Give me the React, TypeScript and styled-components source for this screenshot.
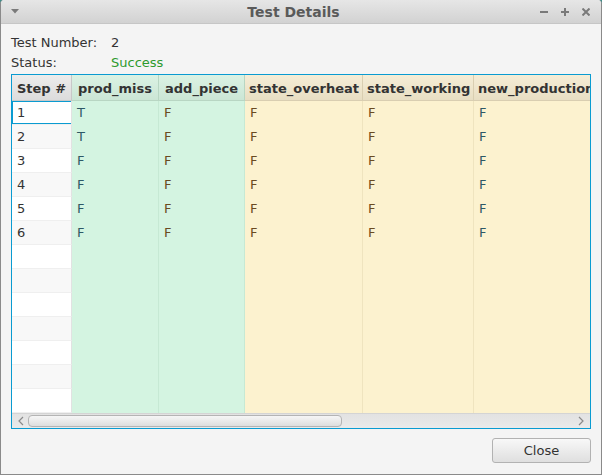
import React from "react";
import styled, { createGlobalStyle, css } from "styled-components";

type Tone = "plain" | "green" | "yellow";

interface Column {
  key: string;
  label: string;
  width: number;
  tone: Tone;
  ink: string;
}

// ink mimics the coloured fringes the JavaFX renderer leaves on each column
const columns: Column[] = [
  { key: "step", label: "Step #", width: 60, tone: "plain", ink: "#333" },
  { key: "prod_miss", label: "prod_miss", width: 87, tone: "green", ink: "#2e5866" },
  { key: "add_piece", label: "add_piece", width: 86, tone: "green", ink: "#6a4b22" },
  { key: "state_overheat", label: "state_overheat", width: 118, tone: "yellow", ink: "#6a4b22" },
  { key: "state_working", label: "state_working", width: 111, tone: "yellow", ink: "#6a4b22" },
  { key: "new_production", label: "new_production", width: 120, tone: "yellow", ink: "#2e5866" },
];

const rows: Record<string, string>[] = [
  { step: "1", prod_miss: "T", add_piece: "F", state_overheat: "F", state_working: "F", new_production: "F" },
  { step: "2", prod_miss: "T", add_piece: "F", state_overheat: "F", state_working: "F", new_production: "F" },
  { step: "3", prod_miss: "F", add_piece: "F", state_overheat: "F", state_working: "F", new_production: "F" },
  { step: "4", prod_miss: "F", add_piece: "F", state_overheat: "F", state_working: "F", new_production: "F" },
  { step: "5", prod_miss: "F", add_piece: "F", state_overheat: "F", state_working: "F", new_production: "F" },
  { step: "6", prod_miss: "F", add_piece: "F", state_overheat: "F", state_working: "F", new_production: "F" },
];

const VISIBLE_ROWS = 13;

const GlobalStyle = createGlobalStyle`
  html, body {
    margin: 0;
    padding: 0;
    background: #3f8f8c;
  }
  * {
    box-sizing: border-box;
  }
`;

const Window = styled.div`
  width: 602px;
  height: 475px;
  display: flex;
  flex-direction: column;
  background: #f4f4f4;
  border: 1px solid #8a8a8a;
  border-top: none;
  border-radius: 4px 4px 0 0;
  overflow: hidden;
  font-family: "DejaVu Sans", Verdana, sans-serif;
  font-size: 13px;
  color: #333;
`;

const TitleBar = styled.div`
  height: 24px;
  flex-shrink: 0;
  display: flex;
  align-items: center;
  padding: 0 11px 0 10px;
  background: linear-gradient(#e6e6e6, #d2d2d2);
  border-bottom: 1px solid #c6c6c6;
`;

const Title = styled.div`
  flex: 1;
  text-align: center;
  font-size: 14px;
  font-weight: bold;
  color: #5a5a5a;
  padding-left: 28px;
`;

const WindowControls = styled.div`
  display: flex;
  align-items: center;
  gap: 13px;
`;

const Body = styled.div`
  flex: 1;
  display: flex;
  flex-direction: column;
  padding: 8px 10px 11px 10px;
`;

const InfoGrid = styled.div`
  display: grid;
  grid-template-columns: 100px auto;
  grid-auto-rows: 20px;
  align-items: center;
  margin-bottom: 2px;
`;

const InfoValue = styled.span<{ $success?: boolean }>`
  color: ${(p) => (p.$success ? "#2d9a2d" : "#333")};
`;

const TableFrame = styled.div`
  height: 355px;
  display: flex;
  flex-direction: column;
  border: 1px solid #0a9bd1;
  background: #fff;
  overflow: hidden;
`;

const HeaderRow = styled.div`
  display: flex;
  height: 26px;
  flex-shrink: 0;
`;

const headerTones = {
  plain: css`
    background: linear-gradient(#ececec, #dcdcdc);
    border-color: #c8c8c8;
  `,
  green: css`
    background: linear-gradient(#dbf2e4, #cbe6d5);
    border-color: #b8d6c3;
  `,
  yellow: css`
    background: linear-gradient(#f5edd6, #e8dec3);
    border-color: #d9ceb1;
  `,
};

const HeaderCell = styled.div<{ $w: number; $tone: Tone }>`
  width: ${(p) => p.$w}px;
  flex-shrink: 0;
  height: 26px;
  line-height: 27px;
  padding: 0 4px;
  text-align: center;
  white-space: nowrap;
  overflow: hidden;
  font-weight: bold;
  color: #333;
  border-right: 1px solid;
  border-bottom: 1px solid;
  ${(p) => headerTones[p.$tone]}
`;

const RowsArea = styled.div`
  flex: 1;
  overflow: hidden;
`;

const Row = styled.div`
  display: flex;
  height: 24px;
`;

const cellTones = {
  plain: css`
    border-right: 1px solid #e2e2e2;
    border-bottom: 1px solid #efefef;
  `,
  green: css`
    background: #d4f4e1;
    border-right: 1px solid #c6e9d4;
  `,
  yellow: css`
    background: #fcf2cf;
    border-right: 1px solid #efe4bf;
  `,
};

const Cell = styled.div<{ $w: number; $tone: Tone; $ink: string; $odd: boolean; $focused?: boolean }>`
  width: ${(p) => p.$w}px;
  flex-shrink: 0;
  height: 24px;
  line-height: 23px;
  padding: 0 5px;
  white-space: nowrap;
  overflow: hidden;
  color: ${(p) => p.$ink};
  background: ${(p) => (p.$odd ? "#fff" : "#f8f8f8")};
  ${(p) => cellTones[p.$tone]}
  ${(p) =>
    p.$focused &&
    css`
      box-shadow: inset 1px 1px 0 #0a9bd1, inset 0 -1px 0 #0a9bd1;
    `}
`;

const ScrollBar = styled.div`
  height: 15px;
  flex-shrink: 0;
  display: flex;
  align-items: center;
  padding: 0 4px;
  background: linear-gradient(#e2e2e2, #eaeaea);
  border-top: 1px solid #d4d4d4;
`;

const ScrollArrow = styled.div`
  width: 10px;
  display: flex;
  justify-content: center;
  align-items: center;
`;

const Track = styled.div`
  flex: 1;
  height: 100%;
  display: flex;
  align-items: center;
  padding: 0 2px;
`;

const Thumb = styled.div`
  width: 314px;
  height: 12px;
  border: 1px solid #b4b4b4;
  border-radius: 4px;
  background: linear-gradient(#f6f6f6, #dedede);
`;

const Footer = styled.div`
  display: flex;
  justify-content: flex-end;
  margin-top: 9px;
`;

const Button = styled.button`
  width: 99px;
  height: 25px;
  padding: 0;
  font-family: "DejaVu Sans", Verdana, sans-serif;
  font-size: 13px;
  color: #333;
  border: 1px solid #b2b2b2;
  border-radius: 3px;
  background: linear-gradient(#f8f8f8, #dfdfdf);
`;

const Chevron: React.FC<{ dir: "left" | "right" }> = ({ dir }) => (
  <svg width="6" height="10" viewBox="0 0 6 10">
    <path
      d={dir === "left" ? "M5 1 L1 5 L5 9" : "M1 1 L5 5 L1 9"}
      fill="none"
      stroke="#8a8a8a"
      strokeWidth="1.2"
    />
  </svg>
);

const App: React.FC = () => {
  const visible = Array.from({ length: VISIBLE_ROWS }, (_, i) => rows[i] ?? null);

  return (
    <>
      <GlobalStyle />
      <Window>
        <TitleBar>
          <svg width="8" height="5" viewBox="0 0 8 5">
            <path d="M0 0 H8 L4 4.5 Z" fill="#7a7a7a" />
          </svg>
          <Title>Test Details</Title>
          <WindowControls>
            <svg width="8" height="8" viewBox="0 0 8 8">
              <path d="M0 4 H8" stroke="#7a7a7a" strokeWidth="2" />
            </svg>
            <svg width="8" height="8" viewBox="0 0 8 8">
              <path d="M0 4 H8 M4 0 V8" stroke="#7a7a7a" strokeWidth="2" />
            </svg>
            <svg width="8" height="8" viewBox="0 0 8 8">
              <path d="M0.5 0.5 L7.5 7.5 M7.5 0.5 L0.5 7.5" stroke="#7a7a7a" strokeWidth="2" />
            </svg>
          </WindowControls>
        </TitleBar>
        <Body>
          <InfoGrid>
            <span>Test Number:</span>
            <InfoValue>2</InfoValue>
            <span>Status:</span>
            <InfoValue $success>Success</InfoValue>
          </InfoGrid>
          <TableFrame>
            <HeaderRow>
              {columns.map((c) => (
                <HeaderCell key={c.key} $w={c.width} $tone={c.tone}>
                  {c.label}
                </HeaderCell>
              ))}
            </HeaderRow>
            <RowsArea>
              {visible.map((r, i) => (
                <Row key={i}>
                  {columns.map((c) => (
                    <Cell
                      key={c.key}
                      $w={c.width}
                      $tone={c.tone}
                      $ink={c.ink}
                      $odd={i % 2 === 0}
                      $focused={i === 0 && c.key === "step"}
                    >
                      {r ? r[c.key] : ""}
                    </Cell>
                  ))}
                </Row>
              ))}
            </RowsArea>
            <ScrollBar>
              <ScrollArrow>
                <Chevron dir="left" />
              </ScrollArrow>
              <Track>
                <Thumb />
              </Track>
              <ScrollArrow>
                <Chevron dir="right" />
              </ScrollArrow>
            </ScrollBar>
          </TableFrame>
          <Footer>
            <Button>Close</Button>
          </Footer>
        </Body>
      </Window>
    </>
  );
};

export default App;
